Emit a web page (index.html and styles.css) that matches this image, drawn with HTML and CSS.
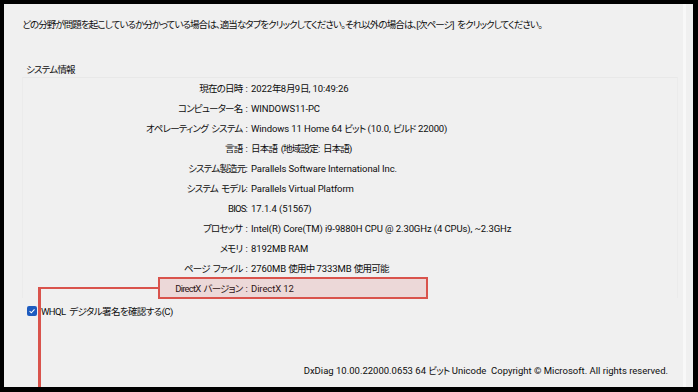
FILE: index.html
```html
<!DOCTYPE html>
<html lang="ja">
<head>
<meta charset="utf-8">
<link rel="stylesheet" href="styles.css">
</head>
<body>
<div class="screen">
  <div class="panel">
    <p class="intro">どの分野が問題を起こしているか分かっている場合は、適当なタブをクリックしてください。それ以外の場合は、[次ページ] をクリックしてください。</p>
    <div class="group">
      <div class="group-title">システム情報</div>
      <div class="group-box">
        <div class="info">
          <div class="label">現在の日時 :</div><div class="value">2022<span class="j">年</span>8<span class="j">月</span>9<span class="j">日</span>, 10:49:26</div>
          <div class="label">コンピューター名 :</div><div class="value">WINDOWS11-PC</div>
          <div class="label">オペレーティング システム :</div><div class="value">Windows 11 Home 64 <span class="j">ビット</span> (10.0, <span class="j">ビルド</span> 22000)</div>
          <div class="label">言語 :</div><div class="value"><span class="j">日本語 (地域設定: 日本語)</span></div>
          <div class="label">システム製造元:</div><div class="value">Parallels Software International Inc.</div>
          <div class="label">システム モデル:</div><div class="value">Parallels Virtual Platform</div>
          <div class="label">BIOS:</div><div class="value">17.1.4 (51567)</div>
          <div class="label">プロセッサ :</div><div class="value">Intel(R) Core(TM) i9-9880H CPU @ 2.30GHz (4 CPUs), ~2.3GHz</div>
          <div class="label">メモリ :</div><div class="value">8192MB RAM</div>
          <div class="label">ページ ファイル :</div><div class="value">2760MB <span class="j">使用中</span> 7333MB <span class="j">使用可能</span></div>
          <div class="label">DirectX バージョン :</div><div class="value">DirectX 12</div>
        </div>
      </div>
    </div>
    <label class="check">
      <span class="box"><svg viewBox="0 0 10 10" width="10" height="10"><path d="M2.6 5.2 L4.3 6.8 L7.5 3.4" fill="none" stroke="#fff" stroke-width="1.1"/></svg></span>
      <span class="check-text">WHQL デジタル署名を確認する(C)</span>
    </label>
    <div class="footer">DxDiag 10.00.22000.0653 64 <span class="j">ビット</span> Unicode&nbsp; Copyright © Microsoft. All rights reserved.</div>
    <div class="hl-box"></div>
    <div class="hl-line-h"></div>
    <div class="hl-line-v"></div>
    <div class="edge-right"></div>
  </div>
</div>
</body>
</html>
```
FILE: styles.css
```css
* { box-sizing: border-box; }
html, body { margin: 0; padding: 0; }
body {
  background: #000;
  width: 698px;
  height: 392px;
  overflow: hidden;
  font-family: Roboto, "Noto Sans CJK JP", sans-serif;
  font-feature-settings: "palt";
  color: #0d0d0d;
}
.screen {
  padding: 4px 5px 5px 4px;
  height: 392px;
}
.panel {
  position: relative;
  background: #f0f0f0;
  height: 383px;
  width: 689px;
  padding: 14px 0 0 18px;
  font-size: 9.5px;
}
.intro {
  margin: 0;
  line-height: 14px;
  height: 14px;
  white-space: nowrap;
  letter-spacing: -0.9px;
  word-spacing: 2px;
}
.group {
  margin-top: 31px;
  width: 656px;
}
.group-title {
  padding-left: 4px;
  line-height: 14px;
  letter-spacing: -0.8px;
}
.group-box {
  border-top: 1px solid #e8e8e8;
  border-left: 1px solid #ebebeb;
  border-right: 1px solid #ebebeb;
}
.info {
  display: grid;
  grid-template-columns: 224px 1fr;
  column-gap: 4px;
  grid-auto-rows: 20px;
  align-items: center;
}
.label {
  text-align: right;
  white-space: nowrap;
  letter-spacing: -0.8px;
  word-spacing: 1.5px;
}
.value {
  white-space: nowrap;
  letter-spacing: -0.1px;
}
.j { letter-spacing: -0.8px; word-spacing: 2px; }
.check {
  display: flex;
  align-items: center;
  gap: 4px;
  margin-top: 6px;
  margin-left: 5px;
  height: 14px;
}
.check-text { letter-spacing: -0.6px; word-spacing: 2px; }
.box {
  width: 10px;
  height: 10px;
  background: #1d5bbf;
  border-radius: 2px;
  display: flex;
}
.footer {
  position: absolute;
  right: 25px;
  bottom: 10px;
  white-space: nowrap;
  letter-spacing: 0;
}
.hl-box {
  position: absolute;
  left: 154px;
  top: 273px;
  width: 270px;
  height: 22px;
  border: 2px solid #d9534c;
  background: rgba(215, 70, 70, 0.14);
}
.hl-line-h {
  position: absolute;
  left: 34px;
  top: 283px;
  width: 121px;
  height: 2px;
  background: #d9534c;
}
.hl-line-v {
  position: absolute;
  left: 34px;
  top: 283px;
  width: 3px;
  height: 100px;
  background: #d9534c;
}
.edge-right {
  position: absolute;
  right: 7px;
  top: 0;
  width: 3px;
  height: 100%;
  background: #f8f8f8;
}
```
